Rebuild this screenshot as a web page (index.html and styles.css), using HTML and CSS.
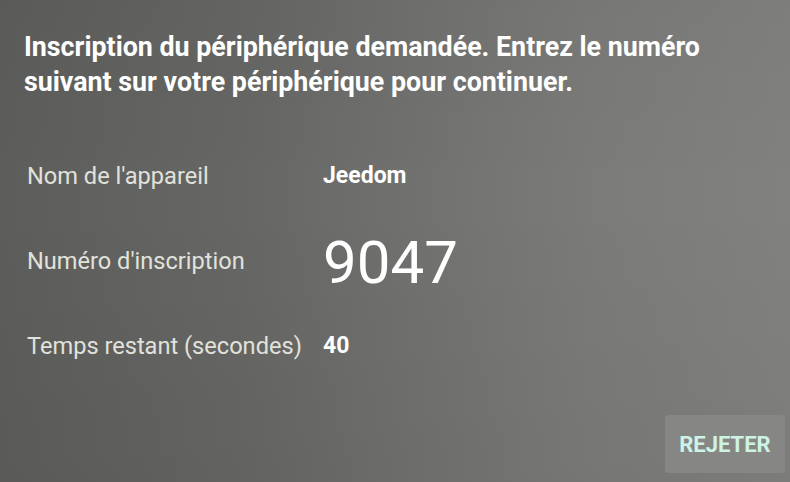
FILE: index.html
```html
<!DOCTYPE html>
<html lang="fr">
<head>
<meta charset="utf-8">
<title>Inscription du périphérique</title>
<link rel="stylesheet" href="styles.css">
</head>
<body>
<main class="screen">
  <h1 class="title">Inscription du périphérique demandée. Entrez le numéro suivant sur votre périphérique pour continuer.</h1>
  <div class="info">
    <div class="label">Nom de l'appareil</div>
    <div class="value">Jeedom</div>
    <div class="label">Numéro d'inscription</div>
    <div class="code">9047</div>
    <div class="label">Temps restant (secondes)</div>
    <div class="value">40</div>
  </div>
  <div class="actions">
    <button class="reject">REJETER</button>
  </div>
</main>
</body>
</html>
```
FILE: styles.css
```css
html, body {
  margin: 0;
  padding: 0;
}
body {
  width: 790px;
  height: 482px;
  overflow: hidden;
  font-family: Roboto, "Liberation Sans", sans-serif;
}
.screen {
  box-sizing: border-box;
  width: 790px;
  height: 482px;
  padding: 30px 5px 0 24px;
  display: flex;
  flex-direction: column;
  background:
    linear-gradient(to bottom, rgba(0,0,0,0.03), rgba(0,0,0,0) 40%, rgba(0,0,0,0.04)),
    linear-gradient(to right, #5d5e5b 0%, #666764 30%, #727371 55%, #7b7c7a 75%, #818280 100%);
}
.title {
  margin: 0;
  font-size: 26.8px;
  font-weight: 700;
  line-height: 35px;
  color: #ffffff;
  width: 720px;
  letter-spacing: 0;
}
.info {
  margin-top: 33px;
  padding-left: 3px;
  display: grid;
  grid-template-columns: 296px 1fr;
  grid-auto-rows: 85px;
  align-items: center;
}
.label {
  font-size: 23.6px;
  color: #e2e2dc;
}
.value {
  font-size: 23px;
  font-weight: 700;
  color: #ffffff;
}
.code {
  font-size: 60px;
  font-weight: 400;
  color: #ffffff;
  line-height: 60px;
  margin-top: 4px;
}
.actions {
  margin-top: 27px;
  display: flex;
  justify-content: flex-end;
}
.reject {
  width: 120px;
  height: 58px;
  border: none;
  border-radius: 3px;
  background: #868785;
  color: #cdf3e4;
  font-family: Roboto, "Liberation Sans", sans-serif;
  font-size: 22px;
  font-weight: 700;
  letter-spacing: 0;
  padding: 0;
}
```
